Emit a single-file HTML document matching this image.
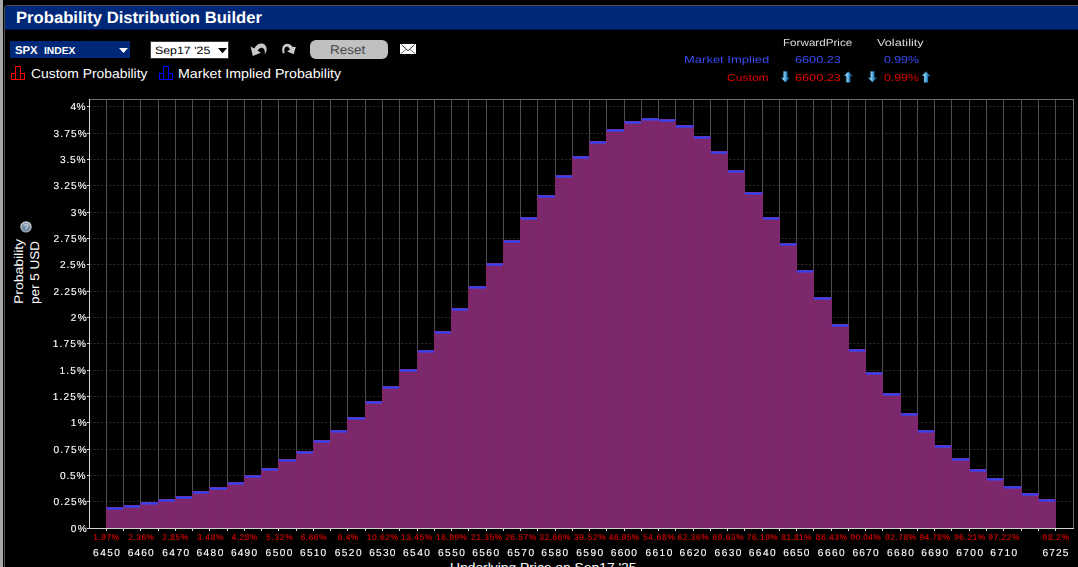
<!DOCTYPE html>
<html><head><meta charset="utf-8"><title>Probability Distribution Builder</title>
<style>
html,body{margin:0;padding:0;background:#000;}
body{width:1078px;height:567px;overflow:hidden;position:relative;font-family:"Liberation Sans",sans-serif;}
.t{position:absolute;white-space:pre;transform-origin:0 0;display:block;text-rendering:geometricPrecision;}
.abs{position:absolute;}
#strip{left:0;top:0;width:3px;height:567px;background:#a8a8a8;}
#frame{left:4px;top:5px;width:1080px;height:570px;border:1px solid #505050;border-radius:3px 0 0 0;box-sizing:border-box;}
#titlebar{left:5px;top:6px;width:1073px;height:24px;background:#002878;border-bottom:1px solid #00104a;box-sizing:border-box;border-radius:2px 0 0 0;}
#sym{left:10px;top:41px;width:120px;height:17px;background:#002878;}
#date{left:150px;top:41px;width:79px;height:18px;background:#fff;border:1px solid #3a3a3a;box-sizing:border-box;}
#reset{left:310px;top:40px;width:78px;height:19px;background:#c0c0c0;border-radius:6px;}
svg{position:absolute;left:0;top:0;}

</style></head><body>
<div id="strip" class="abs"></div><div id="frame" class="abs"></div><div id="titlebar" class="abs"></div>
<div id="sym" class="abs"></div><div id="date" class="abs"></div><div id="reset" class="abs"></div>
<svg width="1078" height="567" viewBox="0 0 1078 567" shape-rendering="crispEdges">
<line x1="89.4" x2="1073" y1="501.5" y2="501.5" stroke="#303030" stroke-dasharray="2 2" shape-rendering="auto"/>
<line x1="89.4" x2="1073" y1="475.5" y2="475.5" stroke="#303030" stroke-dasharray="2 2" shape-rendering="auto"/>
<line x1="89.4" x2="1073" y1="449.5" y2="449.5" stroke="#303030" stroke-dasharray="2 2" shape-rendering="auto"/>
<line x1="89.4" x2="1073" y1="422.5" y2="422.5" stroke="#303030" stroke-dasharray="2 2" shape-rendering="auto"/>
<line x1="89.4" x2="1073" y1="396.5" y2="396.5" stroke="#303030" stroke-dasharray="2 2" shape-rendering="auto"/>
<line x1="89.4" x2="1073" y1="370.5" y2="370.5" stroke="#303030" stroke-dasharray="2 2" shape-rendering="auto"/>
<line x1="89.4" x2="1073" y1="343.5" y2="343.5" stroke="#303030" stroke-dasharray="2 2" shape-rendering="auto"/>
<line x1="89.4" x2="1073" y1="317.5" y2="317.5" stroke="#303030" stroke-dasharray="2 2" shape-rendering="auto"/>
<line x1="89.4" x2="1073" y1="291.5" y2="291.5" stroke="#303030" stroke-dasharray="2 2" shape-rendering="auto"/>
<line x1="89.4" x2="1073" y1="264.5" y2="264.5" stroke="#303030" stroke-dasharray="2 2" shape-rendering="auto"/>
<line x1="89.4" x2="1073" y1="238.5" y2="238.5" stroke="#303030" stroke-dasharray="2 2" shape-rendering="auto"/>
<line x1="89.4" x2="1073" y1="212.5" y2="212.5" stroke="#303030" stroke-dasharray="2 2" shape-rendering="auto"/>
<line x1="89.4" x2="1073" y1="185.5" y2="185.5" stroke="#303030" stroke-dasharray="2 2" shape-rendering="auto"/>
<line x1="89.4" x2="1073" y1="159.5" y2="159.5" stroke="#303030" stroke-dasharray="2 2" shape-rendering="auto"/>
<line x1="89.4" x2="1073" y1="133.5" y2="133.5" stroke="#303030" stroke-dasharray="2 2" shape-rendering="auto"/>
<line x1="89.4" x2="1073" y1="106.5" y2="106.5" stroke="#303030" stroke-dasharray="2 2" shape-rendering="auto"/>
<rect x="106" y="100" width="1" height="428" fill="#4e4e4e"/>
<rect x="123" y="100" width="1" height="428" fill="#4e4e4e"/>
<rect x="140" y="100" width="1" height="428" fill="#4e4e4e"/>
<rect x="158" y="100" width="1" height="428" fill="#4e4e4e"/>
<rect x="175" y="100" width="1" height="428" fill="#4e4e4e"/>
<rect x="192" y="100" width="1" height="428" fill="#4e4e4e"/>
<rect x="209" y="100" width="1" height="428" fill="#4e4e4e"/>
<rect x="227" y="100" width="1" height="428" fill="#4e4e4e"/>
<rect x="244" y="100" width="1" height="428" fill="#4e4e4e"/>
<rect x="261" y="100" width="1" height="428" fill="#4e4e4e"/>
<rect x="278" y="100" width="1" height="428" fill="#4e4e4e"/>
<rect x="296" y="100" width="1" height="428" fill="#4e4e4e"/>
<rect x="313" y="100" width="1" height="428" fill="#4e4e4e"/>
<rect x="330" y="100" width="1" height="428" fill="#4e4e4e"/>
<rect x="347" y="100" width="1" height="428" fill="#4e4e4e"/>
<rect x="365" y="100" width="1" height="428" fill="#4e4e4e"/>
<rect x="382" y="100" width="1" height="428" fill="#4e4e4e"/>
<rect x="399" y="100" width="1" height="428" fill="#4e4e4e"/>
<rect x="417" y="100" width="1" height="428" fill="#4e4e4e"/>
<rect x="434" y="100" width="1" height="428" fill="#4e4e4e"/>
<rect x="451" y="100" width="1" height="428" fill="#4e4e4e"/>
<rect x="468" y="100" width="1" height="428" fill="#4e4e4e"/>
<rect x="486" y="100" width="1" height="428" fill="#4e4e4e"/>
<rect x="503" y="100" width="1" height="428" fill="#4e4e4e"/>
<rect x="520" y="100" width="1" height="428" fill="#4e4e4e"/>
<rect x="537" y="100" width="1" height="428" fill="#4e4e4e"/>
<rect x="555" y="100" width="1" height="428" fill="#4e4e4e"/>
<rect x="572" y="100" width="1" height="428" fill="#4e4e4e"/>
<rect x="589" y="100" width="1" height="428" fill="#4e4e4e"/>
<rect x="606" y="100" width="1" height="428" fill="#4e4e4e"/>
<rect x="624" y="100" width="1" height="428" fill="#4e4e4e"/>
<rect x="641" y="100" width="1" height="428" fill="#4e4e4e"/>
<rect x="658" y="100" width="1" height="428" fill="#4e4e4e"/>
<rect x="675" y="100" width="1" height="428" fill="#4e4e4e"/>
<rect x="693" y="100" width="1" height="428" fill="#4e4e4e"/>
<rect x="710" y="100" width="1" height="428" fill="#4e4e4e"/>
<rect x="727" y="100" width="1" height="428" fill="#4e4e4e"/>
<rect x="744" y="100" width="1" height="428" fill="#4e4e4e"/>
<rect x="762" y="100" width="1" height="428" fill="#4e4e4e"/>
<rect x="779" y="100" width="1" height="428" fill="#4e4e4e"/>
<rect x="796" y="100" width="1" height="428" fill="#4e4e4e"/>
<rect x="813" y="100" width="1" height="428" fill="#4e4e4e"/>
<rect x="831" y="100" width="1" height="428" fill="#4e4e4e"/>
<rect x="848" y="100" width="1" height="428" fill="#4e4e4e"/>
<rect x="865" y="100" width="1" height="428" fill="#4e4e4e"/>
<rect x="882" y="100" width="1" height="428" fill="#4e4e4e"/>
<rect x="900" y="100" width="1" height="428" fill="#4e4e4e"/>
<rect x="917" y="100" width="1" height="428" fill="#4e4e4e"/>
<rect x="934" y="100" width="1" height="428" fill="#4e4e4e"/>
<rect x="951" y="100" width="1" height="428" fill="#4e4e4e"/>
<rect x="969" y="100" width="1" height="428" fill="#4e4e4e"/>
<rect x="986" y="100" width="1" height="428" fill="#4e4e4e"/>
<rect x="1003" y="100" width="1" height="428" fill="#4e4e4e"/>
<rect x="1021" y="100" width="1" height="428" fill="#4e4e4e"/>
<rect x="1038" y="100" width="1" height="428" fill="#4e4e4e"/>
<rect x="1055" y="100" width="1" height="428" fill="#4e4e4e"/>
<rect x="89" y="99" width="985" height="1" fill="#707070"/>
<rect x="1073" y="99" width="1" height="430" fill="#6a6a6a"/>
<rect x="106" y="507" width="18" height="21" fill="#7d276d"/>
<rect x="123" y="505" width="18" height="23" fill="#7d276d"/>
<rect x="140" y="502" width="19" height="26" fill="#7d276d"/>
<rect x="158" y="499" width="18" height="29" fill="#7d276d"/>
<rect x="175" y="496" width="18" height="32" fill="#7d276d"/>
<rect x="192" y="491" width="18" height="37" fill="#7d276d"/>
<rect x="209" y="487" width="19" height="41" fill="#7d276d"/>
<rect x="227" y="482" width="18" height="46" fill="#7d276d"/>
<rect x="244" y="475" width="18" height="53" fill="#7d276d"/>
<rect x="261" y="468" width="18" height="60" fill="#7d276d"/>
<rect x="278" y="459" width="19" height="69" fill="#7d276d"/>
<rect x="296" y="451" width="18" height="77" fill="#7d276d"/>
<rect x="313" y="440" width="18" height="88" fill="#7d276d"/>
<rect x="330" y="430" width="18" height="98" fill="#7d276d"/>
<rect x="347" y="417" width="19" height="111" fill="#7d276d"/>
<rect x="365" y="401" width="18" height="127" fill="#7d276d"/>
<rect x="382" y="386" width="18" height="142" fill="#7d276d"/>
<rect x="399" y="369" width="19" height="159" fill="#7d276d"/>
<rect x="417" y="350" width="18" height="178" fill="#7d276d"/>
<rect x="434" y="331" width="18" height="197" fill="#7d276d"/>
<rect x="451" y="308" width="18" height="220" fill="#7d276d"/>
<rect x="468" y="286" width="19" height="242" fill="#7d276d"/>
<rect x="486" y="263" width="18" height="265" fill="#7d276d"/>
<rect x="503" y="240" width="18" height="288" fill="#7d276d"/>
<rect x="520" y="217" width="18" height="311" fill="#7d276d"/>
<rect x="537" y="195" width="19" height="333" fill="#7d276d"/>
<rect x="555" y="175" width="18" height="353" fill="#7d276d"/>
<rect x="572" y="156" width="18" height="372" fill="#7d276d"/>
<rect x="589" y="141" width="18" height="387" fill="#7d276d"/>
<rect x="606" y="129" width="19" height="399" fill="#7d276d"/>
<rect x="624" y="121" width="18" height="407" fill="#7d276d"/>
<rect x="641" y="118" width="18" height="410" fill="#7d276d"/>
<rect x="658" y="119" width="18" height="409" fill="#7d276d"/>
<rect x="675" y="125" width="19" height="403" fill="#7d276d"/>
<rect x="693" y="136" width="18" height="392" fill="#7d276d"/>
<rect x="710" y="151" width="18" height="377" fill="#7d276d"/>
<rect x="727" y="170" width="18" height="358" fill="#7d276d"/>
<rect x="744" y="192" width="19" height="336" fill="#7d276d"/>
<rect x="762" y="217" width="18" height="311" fill="#7d276d"/>
<rect x="779" y="243" width="18" height="285" fill="#7d276d"/>
<rect x="796" y="270" width="18" height="258" fill="#7d276d"/>
<rect x="813" y="297" width="19" height="231" fill="#7d276d"/>
<rect x="831" y="324" width="18" height="204" fill="#7d276d"/>
<rect x="848" y="349" width="18" height="179" fill="#7d276d"/>
<rect x="865" y="372" width="18" height="156" fill="#7d276d"/>
<rect x="882" y="393" width="19" height="135" fill="#7d276d"/>
<rect x="900" y="413" width="18" height="115" fill="#7d276d"/>
<rect x="917" y="430" width="18" height="98" fill="#7d276d"/>
<rect x="934" y="445" width="18" height="83" fill="#7d276d"/>
<rect x="951" y="458" width="19" height="70" fill="#7d276d"/>
<rect x="969" y="469" width="18" height="59" fill="#7d276d"/>
<rect x="986" y="478" width="18" height="50" fill="#7d276d"/>
<rect x="1003" y="486" width="19" height="42" fill="#7d276d"/>
<rect x="1021" y="493" width="18" height="35" fill="#7d276d"/>
<rect x="1038" y="499" width="18" height="29" fill="#7d276d"/>
<rect x="106" y="507" width="1" height="21" fill="#802560"/>
<rect x="106" y="507" width="18" height="1" fill="#5e34b6"/>
<rect x="107" y="508" width="16" height="1" fill="#2a44ff"/>
<rect x="107" y="509" width="16" height="1" fill="#5838b8"/>
<rect x="123" y="505" width="1" height="23" fill="#802560"/>
<rect x="123" y="505" width="18" height="1" fill="#5e34b6"/>
<rect x="124" y="506" width="16" height="1" fill="#2a44ff"/>
<rect x="124" y="507" width="16" height="1" fill="#5838b8"/>
<rect x="140" y="502" width="1" height="26" fill="#802560"/>
<rect x="140" y="502" width="19" height="1" fill="#5e34b6"/>
<rect x="141" y="503" width="17" height="1" fill="#2a44ff"/>
<rect x="141" y="504" width="17" height="1" fill="#5838b8"/>
<rect x="158" y="499" width="1" height="29" fill="#802560"/>
<rect x="158" y="499" width="18" height="1" fill="#5e34b6"/>
<rect x="159" y="500" width="16" height="1" fill="#2a44ff"/>
<rect x="159" y="501" width="16" height="1" fill="#5838b8"/>
<rect x="175" y="496" width="1" height="32" fill="#802560"/>
<rect x="175" y="496" width="18" height="1" fill="#5e34b6"/>
<rect x="176" y="497" width="16" height="1" fill="#2a44ff"/>
<rect x="176" y="498" width="16" height="1" fill="#5838b8"/>
<rect x="192" y="491" width="1" height="37" fill="#802560"/>
<rect x="192" y="491" width="18" height="1" fill="#5e34b6"/>
<rect x="193" y="492" width="16" height="1" fill="#2a44ff"/>
<rect x="193" y="493" width="16" height="1" fill="#5838b8"/>
<rect x="209" y="487" width="1" height="41" fill="#802560"/>
<rect x="209" y="487" width="19" height="1" fill="#5e34b6"/>
<rect x="210" y="488" width="17" height="1" fill="#2a44ff"/>
<rect x="210" y="489" width="17" height="1" fill="#5838b8"/>
<rect x="227" y="482" width="1" height="46" fill="#802560"/>
<rect x="227" y="482" width="18" height="1" fill="#5e34b6"/>
<rect x="228" y="483" width="16" height="1" fill="#2a44ff"/>
<rect x="228" y="484" width="16" height="1" fill="#5838b8"/>
<rect x="244" y="475" width="1" height="53" fill="#802560"/>
<rect x="244" y="475" width="18" height="1" fill="#5e34b6"/>
<rect x="245" y="476" width="16" height="1" fill="#2a44ff"/>
<rect x="245" y="477" width="16" height="1" fill="#5838b8"/>
<rect x="261" y="468" width="1" height="60" fill="#802560"/>
<rect x="261" y="468" width="18" height="1" fill="#5e34b6"/>
<rect x="262" y="469" width="16" height="1" fill="#2a44ff"/>
<rect x="262" y="470" width="16" height="1" fill="#5838b8"/>
<rect x="278" y="459" width="1" height="69" fill="#802560"/>
<rect x="278" y="459" width="19" height="1" fill="#5e34b6"/>
<rect x="279" y="460" width="17" height="1" fill="#2a44ff"/>
<rect x="279" y="461" width="17" height="1" fill="#5838b8"/>
<rect x="296" y="451" width="1" height="77" fill="#802560"/>
<rect x="296" y="451" width="18" height="1" fill="#5e34b6"/>
<rect x="297" y="452" width="16" height="1" fill="#2a44ff"/>
<rect x="297" y="453" width="16" height="1" fill="#5838b8"/>
<rect x="313" y="440" width="1" height="88" fill="#802560"/>
<rect x="313" y="440" width="18" height="1" fill="#5e34b6"/>
<rect x="314" y="441" width="16" height="1" fill="#2a44ff"/>
<rect x="314" y="442" width="16" height="1" fill="#5838b8"/>
<rect x="330" y="430" width="1" height="98" fill="#802560"/>
<rect x="330" y="430" width="18" height="1" fill="#5e34b6"/>
<rect x="331" y="431" width="16" height="1" fill="#2a44ff"/>
<rect x="331" y="432" width="16" height="1" fill="#5838b8"/>
<rect x="347" y="417" width="1" height="111" fill="#802560"/>
<rect x="347" y="417" width="19" height="1" fill="#5e34b6"/>
<rect x="348" y="418" width="17" height="1" fill="#2a44ff"/>
<rect x="348" y="419" width="17" height="1" fill="#5838b8"/>
<rect x="365" y="401" width="1" height="127" fill="#802560"/>
<rect x="365" y="401" width="18" height="1" fill="#5e34b6"/>
<rect x="366" y="402" width="16" height="1" fill="#2a44ff"/>
<rect x="366" y="403" width="16" height="1" fill="#5838b8"/>
<rect x="382" y="386" width="1" height="142" fill="#802560"/>
<rect x="382" y="386" width="18" height="1" fill="#5e34b6"/>
<rect x="383" y="387" width="16" height="1" fill="#2a44ff"/>
<rect x="383" y="388" width="16" height="1" fill="#5838b8"/>
<rect x="399" y="369" width="1" height="159" fill="#802560"/>
<rect x="399" y="369" width="19" height="1" fill="#5e34b6"/>
<rect x="400" y="370" width="17" height="1" fill="#2a44ff"/>
<rect x="400" y="371" width="17" height="1" fill="#5838b8"/>
<rect x="417" y="350" width="1" height="178" fill="#802560"/>
<rect x="417" y="350" width="18" height="1" fill="#5e34b6"/>
<rect x="418" y="351" width="16" height="1" fill="#2a44ff"/>
<rect x="418" y="352" width="16" height="1" fill="#5838b8"/>
<rect x="434" y="331" width="1" height="197" fill="#802560"/>
<rect x="434" y="331" width="18" height="1" fill="#5e34b6"/>
<rect x="435" y="332" width="16" height="1" fill="#2a44ff"/>
<rect x="435" y="333" width="16" height="1" fill="#5838b8"/>
<rect x="451" y="308" width="1" height="220" fill="#802560"/>
<rect x="451" y="308" width="18" height="1" fill="#5e34b6"/>
<rect x="452" y="309" width="16" height="1" fill="#2a44ff"/>
<rect x="452" y="310" width="16" height="1" fill="#5838b8"/>
<rect x="468" y="286" width="1" height="242" fill="#802560"/>
<rect x="468" y="286" width="19" height="1" fill="#5e34b6"/>
<rect x="469" y="287" width="17" height="1" fill="#2a44ff"/>
<rect x="469" y="288" width="17" height="1" fill="#5838b8"/>
<rect x="486" y="263" width="1" height="265" fill="#802560"/>
<rect x="486" y="263" width="18" height="1" fill="#5e34b6"/>
<rect x="487" y="264" width="16" height="1" fill="#2a44ff"/>
<rect x="487" y="265" width="16" height="1" fill="#5838b8"/>
<rect x="503" y="240" width="1" height="288" fill="#802560"/>
<rect x="503" y="240" width="18" height="1" fill="#5e34b6"/>
<rect x="504" y="241" width="16" height="1" fill="#2a44ff"/>
<rect x="504" y="242" width="16" height="1" fill="#5838b8"/>
<rect x="520" y="217" width="1" height="311" fill="#802560"/>
<rect x="520" y="217" width="18" height="1" fill="#5e34b6"/>
<rect x="521" y="218" width="16" height="1" fill="#2a44ff"/>
<rect x="521" y="219" width="16" height="1" fill="#5838b8"/>
<rect x="537" y="195" width="1" height="333" fill="#802560"/>
<rect x="537" y="195" width="19" height="1" fill="#5e34b6"/>
<rect x="538" y="196" width="17" height="1" fill="#2a44ff"/>
<rect x="538" y="197" width="17" height="1" fill="#5838b8"/>
<rect x="555" y="175" width="1" height="353" fill="#802560"/>
<rect x="555" y="175" width="18" height="1" fill="#5e34b6"/>
<rect x="556" y="176" width="16" height="1" fill="#2a44ff"/>
<rect x="556" y="177" width="16" height="1" fill="#5838b8"/>
<rect x="572" y="156" width="1" height="372" fill="#802560"/>
<rect x="572" y="156" width="18" height="1" fill="#5e34b6"/>
<rect x="573" y="157" width="16" height="1" fill="#2a44ff"/>
<rect x="573" y="158" width="16" height="1" fill="#5838b8"/>
<rect x="589" y="141" width="1" height="387" fill="#802560"/>
<rect x="589" y="141" width="18" height="1" fill="#5e34b6"/>
<rect x="590" y="142" width="16" height="1" fill="#2a44ff"/>
<rect x="590" y="143" width="16" height="1" fill="#5838b8"/>
<rect x="606" y="129" width="1" height="399" fill="#802560"/>
<rect x="606" y="129" width="19" height="1" fill="#5e34b6"/>
<rect x="607" y="130" width="17" height="1" fill="#2a44ff"/>
<rect x="607" y="131" width="17" height="1" fill="#5838b8"/>
<rect x="624" y="121" width="1" height="407" fill="#802560"/>
<rect x="624" y="121" width="18" height="1" fill="#5e34b6"/>
<rect x="625" y="122" width="16" height="1" fill="#2a44ff"/>
<rect x="625" y="123" width="16" height="1" fill="#5838b8"/>
<rect x="641" y="118" width="1" height="410" fill="#802560"/>
<rect x="641" y="118" width="18" height="1" fill="#5e34b6"/>
<rect x="642" y="119" width="16" height="1" fill="#2a44ff"/>
<rect x="642" y="120" width="16" height="1" fill="#5838b8"/>
<rect x="658" y="119" width="1" height="409" fill="#802560"/>
<rect x="658" y="119" width="18" height="1" fill="#5e34b6"/>
<rect x="659" y="120" width="16" height="1" fill="#2a44ff"/>
<rect x="659" y="121" width="16" height="1" fill="#5838b8"/>
<rect x="675" y="125" width="1" height="403" fill="#802560"/>
<rect x="675" y="125" width="19" height="1" fill="#5e34b6"/>
<rect x="676" y="126" width="17" height="1" fill="#2a44ff"/>
<rect x="676" y="127" width="17" height="1" fill="#5838b8"/>
<rect x="693" y="136" width="1" height="392" fill="#802560"/>
<rect x="693" y="136" width="18" height="1" fill="#5e34b6"/>
<rect x="694" y="137" width="16" height="1" fill="#2a44ff"/>
<rect x="694" y="138" width="16" height="1" fill="#5838b8"/>
<rect x="710" y="151" width="1" height="377" fill="#802560"/>
<rect x="710" y="151" width="18" height="1" fill="#5e34b6"/>
<rect x="711" y="152" width="16" height="1" fill="#2a44ff"/>
<rect x="711" y="153" width="16" height="1" fill="#5838b8"/>
<rect x="727" y="170" width="1" height="358" fill="#802560"/>
<rect x="727" y="170" width="18" height="1" fill="#5e34b6"/>
<rect x="728" y="171" width="16" height="1" fill="#2a44ff"/>
<rect x="728" y="172" width="16" height="1" fill="#5838b8"/>
<rect x="744" y="192" width="1" height="336" fill="#802560"/>
<rect x="744" y="192" width="19" height="1" fill="#5e34b6"/>
<rect x="745" y="193" width="17" height="1" fill="#2a44ff"/>
<rect x="745" y="194" width="17" height="1" fill="#5838b8"/>
<rect x="762" y="217" width="1" height="311" fill="#802560"/>
<rect x="762" y="217" width="18" height="1" fill="#5e34b6"/>
<rect x="763" y="218" width="16" height="1" fill="#2a44ff"/>
<rect x="763" y="219" width="16" height="1" fill="#5838b8"/>
<rect x="779" y="243" width="1" height="285" fill="#802560"/>
<rect x="779" y="243" width="18" height="1" fill="#5e34b6"/>
<rect x="780" y="244" width="16" height="1" fill="#2a44ff"/>
<rect x="780" y="245" width="16" height="1" fill="#5838b8"/>
<rect x="796" y="270" width="1" height="258" fill="#802560"/>
<rect x="796" y="270" width="18" height="1" fill="#5e34b6"/>
<rect x="797" y="271" width="16" height="1" fill="#2a44ff"/>
<rect x="797" y="272" width="16" height="1" fill="#5838b8"/>
<rect x="813" y="297" width="1" height="231" fill="#802560"/>
<rect x="813" y="297" width="19" height="1" fill="#5e34b6"/>
<rect x="814" y="298" width="17" height="1" fill="#2a44ff"/>
<rect x="814" y="299" width="17" height="1" fill="#5838b8"/>
<rect x="831" y="324" width="1" height="204" fill="#802560"/>
<rect x="831" y="324" width="18" height="1" fill="#5e34b6"/>
<rect x="832" y="325" width="16" height="1" fill="#2a44ff"/>
<rect x="832" y="326" width="16" height="1" fill="#5838b8"/>
<rect x="848" y="349" width="1" height="179" fill="#802560"/>
<rect x="848" y="349" width="18" height="1" fill="#5e34b6"/>
<rect x="849" y="350" width="16" height="1" fill="#2a44ff"/>
<rect x="849" y="351" width="16" height="1" fill="#5838b8"/>
<rect x="865" y="372" width="1" height="156" fill="#802560"/>
<rect x="865" y="372" width="18" height="1" fill="#5e34b6"/>
<rect x="866" y="373" width="16" height="1" fill="#2a44ff"/>
<rect x="866" y="374" width="16" height="1" fill="#5838b8"/>
<rect x="882" y="393" width="1" height="135" fill="#802560"/>
<rect x="882" y="393" width="19" height="1" fill="#5e34b6"/>
<rect x="883" y="394" width="17" height="1" fill="#2a44ff"/>
<rect x="883" y="395" width="17" height="1" fill="#5838b8"/>
<rect x="900" y="413" width="1" height="115" fill="#802560"/>
<rect x="900" y="413" width="18" height="1" fill="#5e34b6"/>
<rect x="901" y="414" width="16" height="1" fill="#2a44ff"/>
<rect x="901" y="415" width="16" height="1" fill="#5838b8"/>
<rect x="917" y="430" width="1" height="98" fill="#802560"/>
<rect x="917" y="430" width="18" height="1" fill="#5e34b6"/>
<rect x="918" y="431" width="16" height="1" fill="#2a44ff"/>
<rect x="918" y="432" width="16" height="1" fill="#5838b8"/>
<rect x="934" y="445" width="1" height="83" fill="#802560"/>
<rect x="934" y="445" width="18" height="1" fill="#5e34b6"/>
<rect x="935" y="446" width="16" height="1" fill="#2a44ff"/>
<rect x="935" y="447" width="16" height="1" fill="#5838b8"/>
<rect x="951" y="458" width="1" height="70" fill="#802560"/>
<rect x="951" y="458" width="19" height="1" fill="#5e34b6"/>
<rect x="952" y="459" width="17" height="1" fill="#2a44ff"/>
<rect x="952" y="460" width="17" height="1" fill="#5838b8"/>
<rect x="969" y="469" width="1" height="59" fill="#802560"/>
<rect x="969" y="469" width="18" height="1" fill="#5e34b6"/>
<rect x="970" y="470" width="16" height="1" fill="#2a44ff"/>
<rect x="970" y="471" width="16" height="1" fill="#5838b8"/>
<rect x="986" y="478" width="1" height="50" fill="#802560"/>
<rect x="986" y="478" width="18" height="1" fill="#5e34b6"/>
<rect x="987" y="479" width="16" height="1" fill="#2a44ff"/>
<rect x="987" y="480" width="16" height="1" fill="#5838b8"/>
<rect x="1003" y="486" width="1" height="42" fill="#802560"/>
<rect x="1003" y="486" width="19" height="1" fill="#5e34b6"/>
<rect x="1004" y="487" width="17" height="1" fill="#2a44ff"/>
<rect x="1004" y="488" width="17" height="1" fill="#5838b8"/>
<rect x="1021" y="493" width="1" height="35" fill="#802560"/>
<rect x="1021" y="493" width="18" height="1" fill="#5e34b6"/>
<rect x="1022" y="494" width="16" height="1" fill="#2a44ff"/>
<rect x="1022" y="495" width="16" height="1" fill="#5838b8"/>
<rect x="1038" y="499" width="1" height="29" fill="#802560"/>
<rect x="1038" y="499" width="18" height="1" fill="#5e34b6"/>
<rect x="1039" y="500" width="16" height="1" fill="#2a44ff"/>
<rect x="1039" y="501" width="16" height="1" fill="#5838b8"/>
<rect x="89" y="99" width="1" height="430" fill="#d8d8d8"/>
<rect x="89" y="528" width="985" height="1" fill="#d0d0d0"/>
<rect x="87" y="528" width="2" height="1" fill="#e0e0e0"/>
<rect x="87" y="501" width="2" height="1" fill="#e0e0e0"/>
<rect x="87" y="475" width="2" height="1" fill="#e0e0e0"/>
<rect x="87" y="449" width="2" height="1" fill="#e0e0e0"/>
<rect x="87" y="422" width="2" height="1" fill="#e0e0e0"/>
<rect x="87" y="396" width="2" height="1" fill="#e0e0e0"/>
<rect x="87" y="370" width="2" height="1" fill="#e0e0e0"/>
<rect x="87" y="343" width="2" height="1" fill="#e0e0e0"/>
<rect x="87" y="317" width="2" height="1" fill="#e0e0e0"/>
<rect x="87" y="291" width="2" height="1" fill="#e0e0e0"/>
<rect x="87" y="264" width="2" height="1" fill="#e0e0e0"/>
<rect x="87" y="238" width="2" height="1" fill="#e0e0e0"/>
<rect x="87" y="212" width="2" height="1" fill="#e0e0e0"/>
<rect x="87" y="185" width="2" height="1" fill="#e0e0e0"/>
<rect x="87" y="159" width="2" height="1" fill="#e0e0e0"/>
<rect x="87" y="133" width="2" height="1" fill="#e0e0e0"/>
<rect x="87" y="106" width="2" height="1" fill="#e0e0e0"/>
<rect x="106" y="529" width="1" height="2" fill="#e0e0e0"/>
<rect x="123" y="529" width="1" height="2" fill="#e0e0e0"/>
<rect x="140" y="529" width="1" height="2" fill="#e0e0e0"/>
<rect x="158" y="529" width="1" height="2" fill="#e0e0e0"/>
<rect x="175" y="529" width="1" height="2" fill="#e0e0e0"/>
<rect x="192" y="529" width="1" height="2" fill="#e0e0e0"/>
<rect x="209" y="529" width="1" height="2" fill="#e0e0e0"/>
<rect x="227" y="529" width="1" height="2" fill="#e0e0e0"/>
<rect x="244" y="529" width="1" height="2" fill="#e0e0e0"/>
<rect x="261" y="529" width="1" height="2" fill="#e0e0e0"/>
<rect x="278" y="529" width="1" height="2" fill="#e0e0e0"/>
<rect x="296" y="529" width="1" height="2" fill="#e0e0e0"/>
<rect x="313" y="529" width="1" height="2" fill="#e0e0e0"/>
<rect x="330" y="529" width="1" height="2" fill="#e0e0e0"/>
<rect x="347" y="529" width="1" height="2" fill="#e0e0e0"/>
<rect x="365" y="529" width="1" height="2" fill="#e0e0e0"/>
<rect x="382" y="529" width="1" height="2" fill="#e0e0e0"/>
<rect x="399" y="529" width="1" height="2" fill="#e0e0e0"/>
<rect x="417" y="529" width="1" height="2" fill="#e0e0e0"/>
<rect x="434" y="529" width="1" height="2" fill="#e0e0e0"/>
<rect x="451" y="529" width="1" height="2" fill="#e0e0e0"/>
<rect x="468" y="529" width="1" height="2" fill="#e0e0e0"/>
<rect x="486" y="529" width="1" height="2" fill="#e0e0e0"/>
<rect x="503" y="529" width="1" height="2" fill="#e0e0e0"/>
<rect x="520" y="529" width="1" height="2" fill="#e0e0e0"/>
<rect x="537" y="529" width="1" height="2" fill="#e0e0e0"/>
<rect x="555" y="529" width="1" height="2" fill="#e0e0e0"/>
<rect x="572" y="529" width="1" height="2" fill="#e0e0e0"/>
<rect x="589" y="529" width="1" height="2" fill="#e0e0e0"/>
<rect x="606" y="529" width="1" height="2" fill="#e0e0e0"/>
<rect x="624" y="529" width="1" height="2" fill="#e0e0e0"/>
<rect x="641" y="529" width="1" height="2" fill="#e0e0e0"/>
<rect x="658" y="529" width="1" height="2" fill="#e0e0e0"/>
<rect x="675" y="529" width="1" height="2" fill="#e0e0e0"/>
<rect x="693" y="529" width="1" height="2" fill="#e0e0e0"/>
<rect x="710" y="529" width="1" height="2" fill="#e0e0e0"/>
<rect x="727" y="529" width="1" height="2" fill="#e0e0e0"/>
<rect x="744" y="529" width="1" height="2" fill="#e0e0e0"/>
<rect x="762" y="529" width="1" height="2" fill="#e0e0e0"/>
<rect x="779" y="529" width="1" height="2" fill="#e0e0e0"/>
<rect x="796" y="529" width="1" height="2" fill="#e0e0e0"/>
<rect x="813" y="529" width="1" height="2" fill="#e0e0e0"/>
<rect x="831" y="529" width="1" height="2" fill="#e0e0e0"/>
<rect x="848" y="529" width="1" height="2" fill="#e0e0e0"/>
<rect x="865" y="529" width="1" height="2" fill="#e0e0e0"/>
<rect x="882" y="529" width="1" height="2" fill="#e0e0e0"/>
<rect x="900" y="529" width="1" height="2" fill="#e0e0e0"/>
<rect x="917" y="529" width="1" height="2" fill="#e0e0e0"/>
<rect x="934" y="529" width="1" height="2" fill="#e0e0e0"/>
<rect x="951" y="529" width="1" height="2" fill="#e0e0e0"/>
<rect x="969" y="529" width="1" height="2" fill="#e0e0e0"/>
<rect x="986" y="529" width="1" height="2" fill="#e0e0e0"/>
<rect x="1003" y="529" width="1" height="2" fill="#e0e0e0"/>
<rect x="1021" y="529" width="1" height="2" fill="#e0e0e0"/>
<rect x="1038" y="529" width="1" height="2" fill="#e0e0e0"/>
<rect x="1055" y="529" width="1" height="2" fill="#e0e0e0"/>
</svg>
<svg width="1078" height="567" viewBox="0 0 1078 567">
<g fill="none" stroke="#ff0000" stroke-width="1" shape-rendering="crispEdges"><rect x="11.5" y="73.5" width="4" height="6"/><rect x="15.5" y="66.5" width="5" height="13"/><rect x="20.5" y="73.5" width="4" height="6"/></g>
<g fill="none" stroke="#0000ff" stroke-width="1" shape-rendering="crispEdges"><rect x="159.5" y="73.5" width="4" height="6"/><rect x="163.5" y="66.5" width="5" height="13"/><rect x="168.5" y="73.5" width="4" height="6"/></g>
<path d="M119 48 L128 48 L123.5 53 Z" fill="#fff"/>
<path d="M218 48 L227 48 L222.5 53.3 Z" fill="#000"/>
<path d="M250.6 46.6 L252.8 56 L260.9 52.8 L257.6 50.6 C259.2 47.6 262.8 46.6 264.2 49.6 C265 51.4 265 52.8 264.6 54.6 C267 51.6 267.4 47.6 265 45 C262 42 256.6 43.6 254.2 48.6 Z" fill="#c8c8c8"/>
<path d="M282.7 53.2 C281.8 50.2 281.8 46.8 284 45 C286.6 43 290.4 43.6 292.4 46.8 L295.8 47.1 L293.7 54.3 L287.1 51.5 L289.9 49.6 C288.8 46.8 286.6 45.9 285.3 47.2 C284.2 48.4 284.1 50.8 284.6 53.2 Z" fill="#c8c8c8"/>
<g shape-rendering="auto"><rect x="400" y="44" width="16" height="10" fill="#fff"/><path d="M401.4 44.6 L408 50.7 L414.6 44.6" fill="none" stroke="#303030" stroke-width="1"/><path d="M400.4 54 L405.8 49.6 M415.6 54 L410.2 49.6" fill="none" stroke="#606060" stroke-width="0.9"/></g>
<defs><linearGradient id="ag" x1="0" x2="1" y1="0" y2="0"><stop offset="0" stop-color="#2a7ab4"/><stop offset="0.3" stop-color="#9ad6f4"/><stop offset="0.6" stop-color="#3a98d6"/><stop offset="1" stop-color="#0f4a78"/></linearGradient></defs>
<path transform="translate(780.7,71.3)" d="M2.6 0 H6.6 V6.4 H9 L4.6 11 L0.2 6.4 H2.6 Z" fill="url(#ag)" stroke="#0e3f68" stroke-width="0.5"/>
<path transform="translate(843.6,71.5)" d="M2.6 11 H6.6 V4.6 H9 L4.6 0 L0.2 4.6 H2.6 Z" fill="url(#ag)" stroke="#0e3f68" stroke-width="0.5"/>
<path transform="translate(867.8,71.3)" d="M2.6 0 H6.6 V6.4 H9 L4.6 11 L0.2 6.4 H2.6 Z" fill="url(#ag)" stroke="#0e3f68" stroke-width="0.5"/>
<path transform="translate(921.4,71.5)" d="M2.6 11 H6.6 V4.6 H9 L4.6 0 L0.2 4.6 H2.6 Z" fill="url(#ag)" stroke="#0e3f68" stroke-width="0.5"/>
<defs><linearGradient id="hg" x1="0" x2="0" y1="0" y2="1"><stop offset="0" stop-color="#d4dae0"/><stop offset="1" stop-color="#9aa4b0"/></linearGradient><linearGradient id="hg2" x1="0" x2="0" y1="0" y2="1"><stop offset="0" stop-color="#8fa2b8"/><stop offset="1" stop-color="#5f7894"/></linearGradient></defs>
<circle cx="26" cy="226.9" r="5.7" fill="url(#hg)"/>
<circle cx="26" cy="226.9" r="4.4" fill="url(#hg2)"/>
<text x="26" y="229.9" font-family="Liberation Sans, sans-serif" font-size="8.6" font-weight="bold" fill="#ccd6e2" text-anchor="middle">?</text>
</svg>
<div class="abs" style="left:0;top:0;width:0;height:0;"><span class="t" style="left:0;top:0;font-size:12.6px;line-height:12.6px;color:#fff;transform-origin:0 0;transform:translate(12.5px,304.0px) rotate(-90deg) scaleX(1.107);">Probability</span><span class="t" style="left:0;top:0;font-size:12.6px;line-height:12.6px;color:#fff;transform-origin:0 0;transform:translate(28.5px,304.0px) rotate(-90deg) scaleX(1.072);">per 5 USD</span></div>
<span class="t" style="left:16.00px;top:10.08px;font-size:16.38px;line-height:16.38px;color:#fff;font-weight:bold;transform:scaleX(1.0175);">Probability Distribution Builder</span>
<span class="t" style="left:15.15px;top:46.07px;font-size:11.45px;line-height:11.45px;color:#fff;font-weight:bold;transform:scaleX(0.9910);">SPX</span>
<span class="t" style="left:43.50px;top:47.18px;font-size:10.14px;line-height:10.14px;color:#fff;font-weight:bold;transform:scaleX(1.0117);">INDEX</span>
<span class="t" style="left:155.40px;top:46.19px;font-size:10.72px;line-height:10.72px;color:#000;transform:scaleX(1.1534);">Sep17 '25</span>
<span class="t" style="left:330.40px;top:44.08px;font-size:12.61px;line-height:12.61px;color:#4a4a4e;transform:scaleX(1.0688);">Reset</span>
<span class="t" style="left:30.60px;top:67.22px;font-size:13.04px;line-height:13.04px;color:#fff;transform:scaleX(1.0652);">Custom Probability</span>
<span class="t" style="left:177.50px;top:67.22px;font-size:13.04px;line-height:13.04px;color:#fff;transform:scaleX(1.0879);">Market Implied Probability</span>
<span class="t" style="left:449.50px;top:561.22px;font-size:13.04px;line-height:13.04px;color:#fff;transform:scaleX(1.0619);">Underlying Price on Sep17 '25</span>
<div class="abs" style="left:0;top:0;width:1078px;height:567px;will-change:transform;opacity:0.999;">
<span class="t" style="left:782.80px;top:39.08px;font-size:10.14px;line-height:10.14px;color:#ddd;transform:scaleX(1.1502);">ForwardPrice</span>
<span class="t" style="left:877.20px;top:39.08px;font-size:10.14px;line-height:10.14px;color:#ddd;transform:scaleX(1.2571);">Volatility</span>
<span class="t" style="left:684.20px;top:56.08px;font-size:10.14px;line-height:10.14px;color:#3a4cf0;transform:scaleX(1.2836);">Market Implied</span>
<span class="t" style="left:794.50px;top:56.08px;font-size:10.14px;line-height:10.14px;color:#3a4cf0;transform:scaleX(1.2515);">6600.23</span>
<span class="t" style="left:883.60px;top:56.08px;font-size:10.14px;line-height:10.14px;color:#3a4cf0;transform:scaleX(1.2159);">0.99%</span>
<span class="t" style="left:727.10px;top:74.08px;font-size:10.14px;line-height:10.14px;color:#e00000;transform:scaleX(1.1955);">Custom</span>
<span class="t" style="left:794.50px;top:74.08px;font-size:10.14px;line-height:10.14px;color:#e00000;transform:scaleX(1.2515);">6600.23</span>
<span class="t" style="left:883.60px;top:74.08px;font-size:10.14px;line-height:10.14px;color:#e00000;transform:scaleX(1.2159);">0.99%</span>
<span class="t" style="left:70.80px;top:525.08px;font-size:10.14px;line-height:10.14px;color:#fff;-webkit-text-stroke:0.12px #fff;letter-spacing:1.259px;">0%</span>
<span class="t" style="left:53.60px;top:498.08px;font-size:10.14px;line-height:10.14px;color:#fff;-webkit-text-stroke:0.12px #fff;letter-spacing:1.095px;">0.25%</span>
<span class="t" style="left:60.00px;top:472.08px;font-size:10.14px;line-height:10.14px;color:#fff;-webkit-text-stroke:0.12px #fff;letter-spacing:0.807px;">0.5%</span>
<span class="t" style="left:53.60px;top:446.08px;font-size:10.14px;line-height:10.14px;color:#fff;-webkit-text-stroke:0.12px #fff;letter-spacing:1.095px;">0.75%</span>
<span class="t" style="left:70.80px;top:419.08px;font-size:10.14px;line-height:10.14px;color:#fff;-webkit-text-stroke:0.12px #fff;letter-spacing:1.259px;">1%</span>
<span class="t" style="left:52.80px;top:393.08px;font-size:10.14px;line-height:10.14px;color:#fff;-webkit-text-stroke:0.12px #fff;letter-spacing:1.095px;">1.25%</span>
<span class="t" style="left:59.60px;top:367.08px;font-size:10.14px;line-height:10.14px;color:#fff;-webkit-text-stroke:0.12px #fff;letter-spacing:1.074px;">1.5%</span>
<span class="t" style="left:52.80px;top:340.08px;font-size:10.14px;line-height:10.14px;color:#fff;-webkit-text-stroke:0.12px #fff;letter-spacing:1.095px;">1.75%</span>
<span class="t" style="left:70.80px;top:314.08px;font-size:10.14px;line-height:10.14px;color:#fff;-webkit-text-stroke:0.12px #fff;letter-spacing:1.259px;">2%</span>
<span class="t" style="left:53.60px;top:288.08px;font-size:10.14px;line-height:10.14px;color:#fff;-webkit-text-stroke:0.12px #fff;letter-spacing:1.095px;">2.25%</span>
<span class="t" style="left:60.00px;top:261.08px;font-size:10.14px;line-height:10.14px;color:#fff;-webkit-text-stroke:0.12px #fff;letter-spacing:0.807px;">2.5%</span>
<span class="t" style="left:53.60px;top:235.08px;font-size:10.14px;line-height:10.14px;color:#fff;-webkit-text-stroke:0.12px #fff;letter-spacing:1.095px;">2.75%</span>
<span class="t" style="left:70.80px;top:209.08px;font-size:10.14px;line-height:10.14px;color:#fff;-webkit-text-stroke:0.12px #fff;letter-spacing:1.259px;">3%</span>
<span class="t" style="left:53.60px;top:182.08px;font-size:10.14px;line-height:10.14px;color:#fff;-webkit-text-stroke:0.12px #fff;letter-spacing:1.095px;">3.25%</span>
<span class="t" style="left:60.00px;top:156.08px;font-size:10.14px;line-height:10.14px;color:#fff;-webkit-text-stroke:0.12px #fff;letter-spacing:0.807px;">3.5%</span>
<span class="t" style="left:53.60px;top:130.08px;font-size:10.14px;line-height:10.14px;color:#fff;-webkit-text-stroke:0.12px #fff;letter-spacing:1.095px;">3.75%</span>
<span class="t" style="left:70.40px;top:103.08px;font-size:10.14px;line-height:10.14px;color:#fff;-webkit-text-stroke:0.12px #fff;letter-spacing:0.459px;">4%</span>
<span class="t" style="left:93.10px;top:549.08px;font-size:10.14px;line-height:10.14px;color:#fff;-webkit-text-stroke:0.12px #fff;letter-spacing:1.456px;">6450</span>
<span class="t" style="left:127.67px;top:549.08px;font-size:10.14px;line-height:10.14px;color:#fff;-webkit-text-stroke:0.12px #fff;letter-spacing:1.190px;">6460</span>
<span class="t" style="left:162.24px;top:549.08px;font-size:10.14px;line-height:10.14px;color:#fff;-webkit-text-stroke:0.12px #fff;letter-spacing:1.456px;">6470</span>
<span class="t" style="left:196.41px;top:549.08px;font-size:10.14px;line-height:10.14px;color:#fff;-webkit-text-stroke:0.12px #fff;letter-spacing:1.456px;">6480</span>
<span class="t" style="left:230.98px;top:549.08px;font-size:10.14px;line-height:10.14px;color:#fff;-webkit-text-stroke:0.12px #fff;letter-spacing:1.190px;">6490</span>
<span class="t" style="left:265.55px;top:549.08px;font-size:10.14px;line-height:10.14px;color:#fff;-webkit-text-stroke:0.12px #fff;letter-spacing:1.456px;">6500</span>
<span class="t" style="left:300.12px;top:549.08px;font-size:10.14px;line-height:10.14px;color:#fff;-webkit-text-stroke:0.12px #fff;letter-spacing:1.190px;">6510</span>
<span class="t" style="left:334.69px;top:549.08px;font-size:10.14px;line-height:10.14px;color:#fff;-webkit-text-stroke:0.12px #fff;letter-spacing:1.456px;">6520</span>
<span class="t" style="left:369.26px;top:549.08px;font-size:10.14px;line-height:10.14px;color:#fff;-webkit-text-stroke:0.12px #fff;letter-spacing:1.190px;">6530</span>
<span class="t" style="left:403.03px;top:549.08px;font-size:10.14px;line-height:10.14px;color:#fff;-webkit-text-stroke:0.12px #fff;letter-spacing:1.456px;">6540</span>
<span class="t" style="left:438.00px;top:549.08px;font-size:10.14px;line-height:10.14px;color:#fff;-webkit-text-stroke:0.12px #fff;letter-spacing:1.456px;">6550</span>
<span class="t" style="left:472.17px;top:549.08px;font-size:10.14px;line-height:10.14px;color:#fff;-webkit-text-stroke:0.12px #fff;letter-spacing:1.456px;">6560</span>
<span class="t" style="left:507.14px;top:549.08px;font-size:10.14px;line-height:10.14px;color:#fff;-webkit-text-stroke:0.12px #fff;letter-spacing:1.456px;">6570</span>
<span class="t" style="left:541.31px;top:549.08px;font-size:10.14px;line-height:10.14px;color:#fff;-webkit-text-stroke:0.12px #fff;letter-spacing:1.456px;">6580</span>
<span class="t" style="left:576.28px;top:549.08px;font-size:10.14px;line-height:10.14px;color:#fff;-webkit-text-stroke:0.12px #fff;letter-spacing:1.456px;">6590</span>
<span class="t" style="left:610.85px;top:549.08px;font-size:10.14px;line-height:10.14px;color:#fff;-webkit-text-stroke:0.12px #fff;letter-spacing:1.190px;">6600</span>
<span class="t" style="left:645.42px;top:549.08px;font-size:10.14px;line-height:10.14px;color:#fff;-webkit-text-stroke:0.12px #fff;letter-spacing:1.456px;">6610</span>
<span class="t" style="left:679.59px;top:549.08px;font-size:10.14px;line-height:10.14px;color:#fff;-webkit-text-stroke:0.12px #fff;letter-spacing:1.456px;">6620</span>
<span class="t" style="left:714.56px;top:549.08px;font-size:10.14px;line-height:10.14px;color:#fff;-webkit-text-stroke:0.12px #fff;letter-spacing:1.456px;">6630</span>
<span class="t" style="left:748.73px;top:549.08px;font-size:10.14px;line-height:10.14px;color:#fff;-webkit-text-stroke:0.12px #fff;letter-spacing:1.456px;">6640</span>
<span class="t" style="left:783.30px;top:549.08px;font-size:10.14px;line-height:10.14px;color:#fff;-webkit-text-stroke:0.12px #fff;letter-spacing:1.190px;">6650</span>
<span class="t" style="left:817.87px;top:549.08px;font-size:10.14px;line-height:10.14px;color:#fff;-webkit-text-stroke:0.12px #fff;letter-spacing:1.456px;">6660</span>
<span class="t" style="left:852.44px;top:549.08px;font-size:10.14px;line-height:10.14px;color:#fff;-webkit-text-stroke:0.12px #fff;letter-spacing:1.190px;">6670</span>
<span class="t" style="left:887.01px;top:549.08px;font-size:10.14px;line-height:10.14px;color:#fff;-webkit-text-stroke:0.12px #fff;letter-spacing:1.456px;">6680</span>
<span class="t" style="left:921.18px;top:549.08px;font-size:10.14px;line-height:10.14px;color:#fff;-webkit-text-stroke:0.12px #fff;letter-spacing:1.456px;">6690</span>
<span class="t" style="left:956.15px;top:549.08px;font-size:10.14px;line-height:10.14px;color:#fff;-webkit-text-stroke:0.12px #fff;letter-spacing:1.456px;">6700</span>
<span class="t" style="left:990.32px;top:549.08px;font-size:10.14px;line-height:10.14px;color:#fff;-webkit-text-stroke:0.12px #fff;letter-spacing:1.456px;">6710</span>
<span class="t" style="left:1042.38px;top:549.08px;font-size:10.14px;line-height:10.14px;color:#fff;-webkit-text-stroke:0.12px #fff;letter-spacing:1.190px;">6725</span>
<span class="t" style="left:93.22px;top:533.15px;font-size:8.41px;line-height:8.41px;color:#e40000;-webkit-text-stroke:0.12px #e40000;letter-spacing:0.502px;">1.97%</span>
<span class="t" style="left:128.19px;top:533.15px;font-size:8.41px;line-height:8.41px;color:#e40000;-webkit-text-stroke:0.12px #e40000;letter-spacing:0.502px;">2.36%</span>
<span class="t" style="left:162.36px;top:533.15px;font-size:8.41px;line-height:8.41px;color:#e40000;-webkit-text-stroke:0.12px #e40000;letter-spacing:0.502px;">2.85%</span>
<span class="t" style="left:196.94px;top:533.15px;font-size:8.41px;line-height:8.41px;color:#e40000;-webkit-text-stroke:0.12px #e40000;letter-spacing:0.702px;">3.48%</span>
<span class="t" style="left:231.51px;top:533.15px;font-size:8.41px;line-height:8.41px;color:#e40000;-webkit-text-stroke:0.12px #e40000;letter-spacing:0.502px;">4.28%</span>
<span class="t" style="left:266.08px;top:533.15px;font-size:8.41px;line-height:8.41px;color:#e40000;-webkit-text-stroke:0.12px #e40000;letter-spacing:0.702px;">5.32%</span>
<span class="t" style="left:300.65px;top:533.15px;font-size:8.41px;line-height:8.41px;color:#e40000;-webkit-text-stroke:0.12px #e40000;letter-spacing:0.502px;">6.66%</span>
<span class="t" style="left:337.74px;top:533.15px;font-size:8.41px;line-height:8.41px;color:#e40000;-webkit-text-stroke:0.12px #e40000;letter-spacing:0.476px;">8.4%</span>
<span class="t" style="left:366.86px;top:533.15px;font-size:8.41px;line-height:8.41px;color:#e40000;-webkit-text-stroke:0.12px #e40000;letter-spacing:0.517px;">10.62%</span>
<span class="t" style="left:401.03px;top:533.15px;font-size:8.41px;line-height:8.41px;color:#e40000;-webkit-text-stroke:0.12px #e40000;letter-spacing:0.517px;">13.45%</span>
<span class="t" style="left:436.00px;top:533.15px;font-size:8.41px;line-height:8.41px;color:#e40000;-webkit-text-stroke:0.12px #e40000;letter-spacing:0.517px;">16.99%</span>
<span class="t" style="left:470.97px;top:533.15px;font-size:8.41px;line-height:8.41px;color:#e40000;-webkit-text-stroke:0.12px #e40000;letter-spacing:0.517px;">21.35%</span>
<span class="t" style="left:505.14px;top:533.15px;font-size:8.41px;line-height:8.41px;color:#e40000;-webkit-text-stroke:0.12px #e40000;letter-spacing:0.517px;">26.57%</span>
<span class="t" style="left:539.31px;top:533.15px;font-size:8.41px;line-height:8.41px;color:#e40000;-webkit-text-stroke:0.12px #e40000;letter-spacing:0.517px;">32.66%</span>
<span class="t" style="left:573.88px;top:533.15px;font-size:8.41px;line-height:8.41px;color:#e40000;-webkit-text-stroke:0.12px #e40000;letter-spacing:0.677px;">39.52%</span>
<span class="t" style="left:608.85px;top:533.15px;font-size:8.41px;line-height:8.41px;color:#e40000;-webkit-text-stroke:0.12px #e40000;letter-spacing:0.357px;">46.95%</span>
<span class="t" style="left:643.02px;top:533.15px;font-size:8.41px;line-height:8.41px;color:#e40000;-webkit-text-stroke:0.12px #e40000;letter-spacing:0.677px;">54.68%</span>
<span class="t" style="left:677.59px;top:533.15px;font-size:8.41px;line-height:8.41px;color:#e40000;-webkit-text-stroke:0.12px #e40000;letter-spacing:0.517px;">62.36%</span>
<span class="t" style="left:712.56px;top:533.15px;font-size:8.41px;line-height:8.41px;color:#e40000;-webkit-text-stroke:0.12px #e40000;letter-spacing:0.517px;">69.63%</span>
<span class="t" style="left:746.73px;top:533.15px;font-size:8.41px;line-height:8.41px;color:#e40000;-webkit-text-stroke:0.12px #e40000;letter-spacing:0.517px;">76.19%</span>
<span class="t" style="left:781.30px;top:533.15px;font-size:8.41px;line-height:8.41px;color:#e40000;-webkit-text-stroke:0.12px #e40000;letter-spacing:0.357px;">81.81%</span>
<span class="t" style="left:815.87px;top:533.15px;font-size:8.41px;line-height:8.41px;color:#e40000;-webkit-text-stroke:0.12px #e40000;letter-spacing:0.517px;">86.43%</span>
<span class="t" style="left:850.44px;top:533.15px;font-size:8.41px;line-height:8.41px;color:#e40000;-webkit-text-stroke:0.12px #e40000;letter-spacing:0.357px;">90.04%</span>
<span class="t" style="left:885.01px;top:533.15px;font-size:8.41px;line-height:8.41px;color:#e40000;-webkit-text-stroke:0.12px #e40000;letter-spacing:0.517px;">92.78%</span>
<span class="t" style="left:919.58px;top:533.15px;font-size:8.41px;line-height:8.41px;color:#e40000;-webkit-text-stroke:0.12px #e40000;letter-spacing:0.357px;">94.78%</span>
<span class="t" style="left:954.15px;top:533.15px;font-size:8.41px;line-height:8.41px;color:#e40000;-webkit-text-stroke:0.12px #e40000;letter-spacing:0.517px;">96.21%</span>
<span class="t" style="left:988.32px;top:533.15px;font-size:8.41px;line-height:8.41px;color:#e40000;-webkit-text-stroke:0.12px #e40000;letter-spacing:0.517px;">97.22%</span>
<span class="t" style="left:1042.50px;top:533.15px;font-size:8.41px;line-height:8.41px;color:#e40000;-webkit-text-stroke:0.12px #e40000;letter-spacing:0.702px;">98.2%</span>
</div>
</body></html>
